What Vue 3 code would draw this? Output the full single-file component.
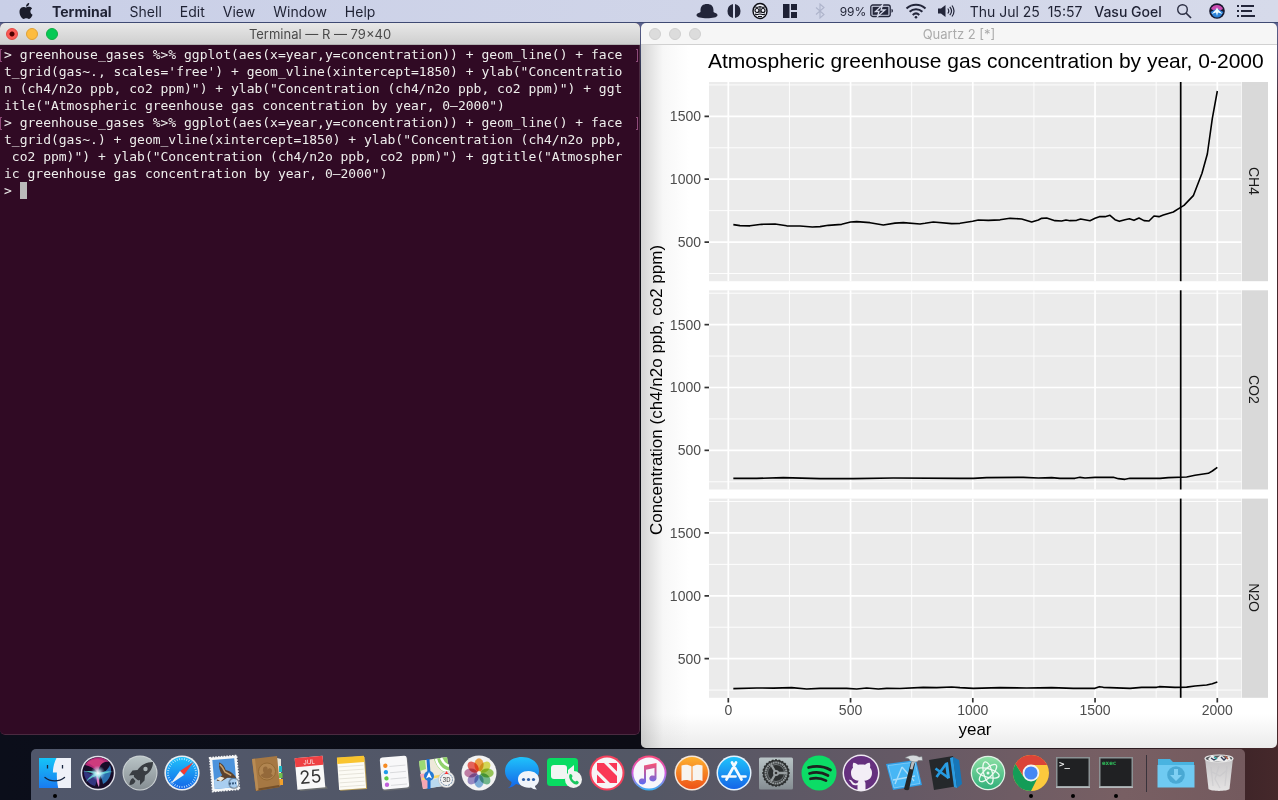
<script setup>
const menus = ['Shell', 'Edit', 'View', 'Window', 'Help']

const lines = [
  { text: '> greenhouse_gases %>% ggplot(aes(x=year,y=concentration)) + geom_line() + face', mark: true },
  { text: 't_grid(gas~., scales=\'free\') + geom_vline(xintercept=1850) + ylab("Concentratio' },
  { text: 'n (ch4/n2o ppb, co2 ppm)") + ylab("Concentration (ch4/n2o ppb, co2 ppm)") + ggt' },
  { text: 'itle("Atmospheric greenhouse gas concentration by year, 0–2000")' },
  { text: '> greenhouse_gases %>% ggplot(aes(x=year,y=concentration)) + geom_line() + face', mark: true },
  { text: 't_grid(gas~.) + geom_vline(xintercept=1850) + ylab("Concentration (ch4/n2o ppb,' },
  { text: ' co2 ppm)") + ylab("Concentration (ch4/n2o ppb, co2 ppm)") + ggtitle("Atmospher' },
  { text: 'ic greenhouse gas concentration by year, 0–2000")' },
]

const xAt = (year) => 728.3 + year * 0.2445
const yAt = (value) => 222.9 - value * 0.1257

const years = [0, 500, 1000, 1500, 2000]
const minorYears = [250, 750, 1250, 1750]
const values = [500, 1000, 1500]
const minorValues = [250, 750, 1250, 1750]

// Series points are on a grid three times finer than the plot.
const panels = [
  {
    name: 'CH4', top: 82, origin: 40,
    points: '280,554 300,557 330,557.5 365,553 405,552 440,557.5 480,558 517,561 540,560 565,556 605,553 632,546 650,545 690,548 730,555 765,549.5 790,548 840,552 855,550 880,546 935,551 960,550 998,544 1015,540 1045,541 1080,539.5 1110,535 1145,537 1175,546 1195,540 1205,535 1220,534 1245,542 1265,543 1278,540 1290,542 1310,541 1322,537 1350,542 1365,535 1378,530 1395,530 1410,526 1425,539 1438,544 1455,539 1468,536.5 1482,541 1497,534 1512,542 1527,543 1542,528 1557,530 1570,525 1600,516 1622,502 1632,496 1660,467 1686,400 1702,342 1717,235 1732,153',
  },
  {
    name: 'CO2', top: 290.3, origin: 440,
    points: '280,115 350,115 430,113 540,116 640,116 760,114 960,115 1000,115 1040,113 1150,112 1195,114 1235,113 1260,115 1305,115 1320,112 1335,114 1365,112 1420,112 1435,116 1455,118 1470,115 1560,115 1585,113 1640,111 1665,106 1705,100 1717,93 1732,82',
  },
  {
    name: 'N2O', top: 498.6, origin: 440,
    points: '280,746 350,744 400,744.5 455,743 500,747 540,745 620,745 650,747 680,744 715,747 740,745 780,745.5 850,742 890,743 935,741 960,743 1000,745 1080,743 1160,744 1235,743 1300,745 1365,745 1378,740 1390,742 1470,745 1505,742 1550,742 1558,740 1605,742 1640,741.5 1665,738 1700,735 1717,731 1732,726',
  },
]

const petals = ['#f79a2d', '#d9dc3c', '#8dc641', '#5fb57f', '#6fa8dc', '#8f7fc4', '#c06f9f', '#ef4e45']
const teeth = Array.from({ length: 24 }, (_, i) => i * 15)
const ticks = Array.from({ length: 36 }, (_, i) => i * 10)

const apps = [
  { id: 'finder', name: 'Finder', open: true },
  { id: 'siri', name: 'Siri' },
  { id: 'launchpad', name: 'Launchpad' },
  { id: 'safari', name: 'Safari' },
  { id: 'mail', name: 'Mail' },
  { id: 'contacts', name: 'Contacts' },
  { id: 'calendar', name: 'Calendar' },
  { id: 'notes', name: 'Notes' },
  { id: 'reminders', name: 'Reminders' },
  { id: 'maps', name: 'Maps' },
  { id: 'photos', name: 'Photos' },
  { id: 'messages', name: 'Messages' },
  { id: 'facetime', name: 'FaceTime' },
  { id: 'news', name: 'News' },
  { id: 'itunes', name: 'iTunes' },
  { id: 'books', name: 'Books' },
  { id: 'appstore', name: 'App Store' },
  { id: 'settings', name: 'System Preferences' },
  { id: 'spotify', name: 'Spotify' },
  { id: 'github', name: 'GitHub Desktop' },
  { id: 'xcode', name: 'Xcode' },
  { id: 'code', name: 'Visual Studio Code' },
  { id: 'atom', name: 'Atom' },
  { id: 'chrome', name: 'Google Chrome', open: true },
  { id: 'terminal', name: 'Terminal', open: true },
  { id: 'exec', name: 'exec', open: true },
  { id: 'separator' },
  { id: 'downloads', name: 'Downloads' },
  { id: 'trash', name: 'Trash' },
]
</script>

<template>
  <div class="desktop">
    <header class="menubar">
      <nav class="menus" aria-label="Menu bar">
        <button class="apple" aria-label="Apple">
          <svg width="16" height="16" viewBox="0 0 24 24"><path fill="#1b1d2b" d="M12.152 6.896c-.948 0-2.415-1.078-3.96-1.04-2.04.027-3.91 1.183-4.961 3.014-2.117 3.675-.546 9.103 1.519 12.09 1.013 1.454 2.208 3.09 3.792 3.039 1.52-.065 2.09-.987 3.935-.987 1.831 0 2.35.987 3.96.948 1.637-.026 2.676-1.48 3.676-2.948 1.156-1.688 1.636-3.325 1.662-3.415-.039-.013-3.182-1.221-3.22-4.857-.026-3.04 2.48-4.494 2.597-4.559-1.429-2.09-3.623-2.324-4.39-2.376-2-.156-3.675 1.09-4.61 1.09zM15.53 3.83c.843-1.012 1.4-2.427 1.245-3.83-1.207.052-2.662.805-3.532 1.818-.78.896-1.454 2.338-1.273 3.714 1.338.104 2.715-.688 3.559-1.701" /></svg>
        </button>
        <button class="app-menu">Terminal</button>
        <button v-for="m in menus" :key="m">{{ m }}</button>
      </nav>
      <div class="status">
        <button class="w30" aria-label="Bartender"><svg width="22" height="16" viewBox="0 0 22 16"><path d="M4.500 9V7.500C4.500 3 7 1 11 1s6.500 2 6.500 6.500V9c1.500 1 4 1.500 4 3 0 2.600-5 3.200-10.500 3.200S.5 14.600.5 12c0-1.500 2.500-2 4-3z" fill="#23263a" /></svg></button>
        <button class="w24" aria-label="Display"><svg width="16" height="16" viewBox="0 0 16 16" fill="#23263a"><path d="M7 1a7.200 7.200 0 0 0 0 14zM9 1a7.200 7.200 0 0 1 0 14z" /></svg></button>
        <button class="w28" aria-label="Owl"><svg width="18" height="18" viewBox="0 0 16 18"><ellipse cx="8" cy="9" rx="7" ry="7.500" fill="#f3f4fb" stroke="#0c0d14" stroke-width="1.400" /><path d="M2 4.500 5 5.500 8 4.500l3 1 3-1M3 12c2 1.500 3.500 0 5 0s3 1.500 5 0M6 14.500h4M8 5v6" fill="none" stroke="#0c0d14" stroke-width="1.100" /><circle cx="5" cy="8.500" r="2" fill="none" stroke="#0c0d14" stroke-width="1.200" /><circle cx="11" cy="8.500" r="2" fill="none" stroke="#0c0d14" stroke-width="1.200" /></svg></button>
        <button class="w32" aria-label="Window layout"><svg width="16" height="16" viewBox="0 0 16 16" fill="#1e2135"><path d="M1 1h6.500v14H1zM9 1h6v6H9zM9 9h6v6H9z" /></svg></button>
        <button class="w28" aria-label="Bluetooth"><svg width="12" height="16" viewBox="0 0 12 16" fill="none" stroke="#aeb4cb" stroke-width="1.100"><path d="m2 4.500 8 7-4 3.500V1l4 3.500-8 7" /></svg></button>
        <button class="battery"><span>99%</span><svg width="24" height="14" viewBox="0 0 24 14"><rect x=".8" y="1" width="19.400" height="11.500" rx="2" fill="none" stroke="#23263a" stroke-width="1.300" /><rect x="2.600" y="2.800" width="15.800" height="8" fill="#23263a" /><path d="M21.500 4.800q1.500.6 1.500 2t-1.500 2z" fill="#23263a" /><path d="m12.500 1-7 6.500H9l-1.500 5 7.500-6.500h-4z" fill="#23263a" stroke="#d5d9ea" stroke-width="1.300" /></svg></button>
        <button class="w32" aria-label="Wi-Fi"><svg width="22" height="16" viewBox="0 0 22 16" fill="none" stroke="#23263a" stroke-width="2"><path d="M1.500 5.500c5.500-5 13.500-5 19 0M4.600 8.800c3.700-3.400 9.100-3.400 12.800 0M7.700 11.900c2-1.800 4.600-1.800 6.600 0" /><circle cx="11" cy="14.200" r="1.300" fill="#23263a" stroke="none" /></svg></button>
        <button class="w28" aria-label="Volume"><svg width="18" height="14" viewBox="0 0 18 14"><path d="M1 4.500h3L8.500 1v12L4 9.500H1z" fill="#23263a" /><path d="M10.800 4.500q2 2.500 0 5M12.800 2.800q3.500 4.200 0 8.400M15 1.500q4 5.500 0 11" fill="none" stroke="#23263a" stroke-width="1.200" /></svg></button>
        <button class="clock">Thu Jul 25&nbsp; 15:57</button>
        <button class="user">Vasu Goel</button>
        <button class="w40" aria-label="Spotlight"><svg width="16" height="16" viewBox="0 0 16 16" fill="none" stroke="#2d3044" stroke-width="1.400"><circle cx="6.500" cy="6.500" r="4.800" /><path d="m10 10 5 5" stroke-width="1.700" /></svg></button>
        <button class="w26" aria-label="Siri"><svg width="16" height="16" viewBox="0 0 16 16"><circle cx="8" cy="8" r="7.800" fill="#15162c" /><path d="M2 6a6.500 6.500 0 0 1 12 0L8 9z" fill="#c94bb1" /><path d="M1.500 9 8 5.500 14.500 9 12 13a6.500 6.500 0 0 1-8 0z" fill="#2a82d8" /><path d="m8 4.500 1.500 2.500 4 4-4.500-1.500L8 13 7 9.500 2.500 11l4-4z" fill="#eefcff" /></svg></button>
        <button class="w32" aria-label="Notification Center"><svg width="18" height="14" viewBox="0 0 18 14" stroke="#23263a" stroke-width="2"><path d="M0 2h2M4 2h13M0 7h2M4 7h11M0 12h2M4 12h14" /></svg></button>
      </div>
    </header>

    <main class="workspace">
      <section class="window shell" aria-label="Terminal">
        <div class="titlebar">
          <div class="lights">
            <button class="light red" aria-label="Close"></button>
            <button class="light yellow" aria-label="Minimize"></button>
            <button class="light green" aria-label="Zoom"></button>
          </div>
          <h1>Terminal — R — 79×40</h1>
        </div>
        <div class="console">
          <div v-for="(l, i) in lines" :key="i" class="row" :class="{ marked: l.mark }">{{ l.text }}</div>
          <div class="row">&gt; <span class="cursor">&nbsp;</span></div>
        </div>
      </section>

      <section class="window quartz" aria-label="Quartz">
        <div class="titlebar">
          <div class="lights">
            <button class="light" aria-label="Close"></button>
            <button class="light" aria-label="Minimize"></button>
            <button class="light" aria-label="Zoom"></button>
          </div>
          <h1>Quartz 2 [*]</h1>
        </div>
        <div class="canvas">
          <svg class="plot" viewBox="641 45 636 703" role="img" aria-label="Greenhouse gas concentration chart">
            <text class="title" x="708" y="68">Atmospheric greenhouse gas concentration by year, 0-2000</text>
            <text class="axis" transform="translate(662 390) rotate(-90)" text-anchor="middle">Concentration (ch4/n2o ppb, co2 ppm)</text>
            <g v-for="p in panels" :key="p.name">
              <g :transform="`translate(0 ${p.top})`">
                <rect x="709" y="0" width="532.500" height="199.200" fill="#ebebeb" />
                <g stroke="#fff">
                  <path v-for="v in minorValues" :key="v" :d="`M709 ${yAt(v)}H1241.500`" stroke-width="0.900" />
                  <path v-for="y in minorYears" :key="y" :d="`M${xAt(y)} 0V199.200`" stroke-width="0.900" />
                  <path v-for="v in values" :key="v" :d="`M709 ${yAt(v)}H1241.500`" stroke-width="1.700" />
                  <path v-for="y in years" :key="y" :d="`M${xAt(y)} 0V199.200`" stroke-width="1.700" />
                </g>
                <rect x="1242" y="0" width="26" height="199.200" fill="#d9d9d9" />
                <text class="strip" transform="translate(1249 99) rotate(90)" text-anchor="middle">{{ p.name }}</text>
                <g v-for="v in values" :key="v">
                  <path :d="`M704.500 ${yAt(v)}H709`" stroke="#333" stroke-width="1.700" />
                  <text class="tick" x="701" :y="yAt(v) + 5" text-anchor="end">{{ v }}</text>
                </g>
                <path d="M1180.700 0V199.200" stroke="#000" stroke-width="1.700" />
              </g>
              <g :transform="`translate(640 ${p.origin}) scale(0.33333)`">
                <polyline :points="p.points" fill="none" stroke="#000" stroke-width="4.800" stroke-linejoin="round" />
              </g>
            </g>
            <g v-for="y in years" :key="y">
              <path :d="`M${xAt(y)} 698V702.500`" stroke="#333" stroke-width="1.700" />
              <text class="tick" :x="xAt(y)" y="715" text-anchor="middle">{{ y }}</text>
            </g>
            <text class="axis" x="975" y="735" text-anchor="middle">year</text>
          </svg>
        </div>
      </section>
    </main>

    <svg class="defs" width="0" height="0" aria-hidden="true">
      <defs>
        <linearGradient id="gBlue" x2="0" y2="1"><stop stop-color="#1fc3fb" /><stop offset="1" stop-color="#1465e8" /></linearGradient>
        <linearGradient id="gFinder" x2="0" y2="1"><stop stop-color="#14c4f8" /><stop offset="1" stop-color="#1a7bf0" /></linearGradient>
        <linearGradient id="gGray" x2="0" y2="1"><stop stop-color="#b9c4c6" /><stop offset="1" stop-color="#858d92" /></linearGradient>
        <linearGradient id="gOrange" x2="0" y2="1"><stop stop-color="#fdb02e" /><stop offset="1" stop-color="#ee5217" /></linearGradient>
        <linearGradient id="gAtom" x2="0" y2="1"><stop stop-color="#8ce0a4" /><stop offset="1" stop-color="#32b07a" /></linearGradient>
        <linearGradient id="gTunes" x2="0" y2="1"><stop stop-color="#fb4a78" /><stop offset=".5" stop-color="#d25be0" /><stop offset="1" stop-color="#35b4f5" /></linearGradient>
        <linearGradient id="gNote" x2="0" y2="1"><stop stop-color="#fb5071" /><stop offset="1" stop-color="#5b6cf3" /></linearGradient>
        <linearGradient id="gTrash" x2="0" y2="1"><stop stop-color="#c9c9cb" /><stop offset="1" stop-color="#ececec" /></linearGradient>
        <radialGradient id="gGlow"><stop stop-color="#fff" /><stop offset=".35" stop-color="#d8fbff" stop-opacity=".75" /><stop offset="1" stop-color="#9cf" stop-opacity="0" /></radialGradient>
      </defs>
    </svg>

    <footer class="dock" aria-label="Dock">
      <template v-for="a in apps" :key="a.id">
        <div v-if="a.id === 'separator'" class="separator"></div>
        <button v-else class="app" :aria-label="a.name">
          <svg width="40" height="40" viewBox="0 0 40 40">
            <g v-if="a.id === 'finder'">
              <path d="M4 5h32v30H4z" fill="#eef1f8" /><path d="M4 5h17.500c-2.500 5-3.500 9.500-3.600 14.500h4c-.3 5.500.3 10.500 1.300 15.500H4z" fill="url(#gFinder)" /><path d="M12.500 12v3.500M27.500 12v3.500" stroke="#15233c" stroke-width="1.300" /><path d="M10 24.500c5.500 4.500 14 4.500 19.500 0" fill="none" stroke="#15233c" stroke-width="1.400" stroke-linecap="round" />
            </g>
            <g v-else-if="a.id === 'siri'">
              <circle cx="20" cy="20" r="17.300" fill="#dfe0e8" /><circle cx="20" cy="20" r="15.800" fill="#170c28" /><path d="M7 12C12 3 25 2 31 9c-7-1-10 3-11 11C16 15 12 13 7 12z" fill="#b32a78" /><path d="M9 10c6-5 14-5 18-1-4 1-6 5-7 9-3-4-7-7-11-8z" fill="#d8437f" opacity=".7" /><path d="M32 12c3 8-1 16-7 19-1-5-2-8-5-11 6 0 10-3 12-8z" fill="#2b6fae" /><path d="M6 17c-1 8 5 15 11 16 2-5 3-9 3-13-5 2-10 1-14-3z" fill="#32357f" /><path d="M5 19c8-2 11-1 15 1 5-1 10-3 15-1-5 0-9 2-12 3-2 2-2 7-2 12-2-5-2-9-3-11-5 2-7 3-10 6 2-4 5-6 8-8-4-2-7-2-11-2z" fill="#5fdcd2" opacity=".85" /><path d="M19 22c2 3 3 7 2 12-2-3-3-8-2-12z" fill="#e77fc9" /><circle cx="20" cy="20" r="7.500" fill="url(#gGlow)" />
            </g>
            <g v-else-if="a.id === 'launchpad'">
              <circle cx="20" cy="20" r="17.500" fill="#cdd3d5" /><circle cx="20" cy="20" r="16.500" fill="url(#gGray)" /><path d="M33 9c-7 0-12 3-15.500 8l-5 .5L9 22.500l5-.5c-.5 1 0 2 .5 2.500l3 2.500c1 .5 1.500.5 2.500 0l0 5 4.500-4.500.5-5c5-3 8-7.500 8-13.500zM13 25c-2.500 1-3.500 4-3.500 7 3 0 5-1.500 6-4z" fill="#393d42" /><circle cx="25.500" cy="16" r="2.200" fill="#a9b2b5" />
            </g>
            <g v-else-if="a.id === 'safari'">
              <circle cx="20" cy="20" r="17.600" fill="#e9edf1" /><circle cx="20" cy="20" r="16" fill="url(#gBlue)" /><path v-for="t in ticks" :key="t" d="M20 5v2" stroke="#d7f1ff" stroke-width=".7" :transform="`rotate(${t} 20 20)`" /><path d="M31.500 9 22 22l-4-4z" fill="#f63b30" /><path d="M8.500 31 18 18l4 4z" fill="#f1f3f5" />
            </g>
            <g v-else-if="a.id === 'mail'" transform="rotate(-5 20 20)">
              <path d="M6 3.500h27v34H6z" fill="#f6f7f7" stroke="#f6f7f7" stroke-width="1.600" stroke-dasharray="1.600 1.200" /><path d="M8.500 6h22v29h-22z" fill="#4c93dc" /><path d="M8.500 26c7-3 15-1 22 1v8h-22z" fill="#a9cef0" /><path d="M15 9c3 1 5 4 6 8 4 1 8 5 10 9-4 0-6-1-9-1l-6 3-5-1c2-3 4-4 6-5-2-4-3-8-2-13z" fill="#5b422d" /><path d="M15.500 11c2 2 3.500 5 4.500 8l6 4" fill="none" stroke="#c9a06a" stroke-width="1.500" /><path d="m11 25 4-2 4 2-4 3z" fill="#f0e6d2" /><circle cx="28" cy="31" r="5" fill="none" stroke="#53697d" stroke-opacity=".6" stroke-width="1.500" /><path d="M23 31h7" stroke="#34577c" stroke-width="2" stroke-dasharray="2 1" />
            </g>
            <g v-else-if="a.id === 'contacts'">
              <path d="m30 5 4 1v26l-3 1z" fill="#e6e4da" /><path d="M32 13h3v6h-3z" fill="#1fb8c9" /><path d="M32 20h3.500v5H32z" fill="#72c04c" /><path d="M32 26h4v6h-4z" fill="#f0a02c" /><path d="m5 6 25-3 3 31-24 4z" fill="#a67843" /><path d="m9 38 24-4-1-2-24 4z" fill="#75502a" /><path d="m5 6 3-.3L11.500 37 9 38z" fill="#b88b54" /><circle cx="20" cy="18.500" r="8.500" fill="#b18550" stroke="#8d632f" stroke-width=".8" /><path d="M13.500 22.500c1-1.500 2.500-1.500 3.500-2.500-2-3-1-6.500 1.500-6.500 2 0 2.500 2 2 3.500 1-3 5-2 4.500 1 0 1-.5 2-1 2.500.5 1 1.500 1 2 2-3 4-9.500 4-12.500 0z" fill="#94693a" />
            </g>
            <g v-else-if="a.id === 'calendar'" transform="rotate(-5 20 20)">
              <path d="m7 35 28-1 1.500 3H9z" fill="#6c6f70" /><path d="M6 4h28v31.500H6z" fill="#f8f8f8" /><path d="M6 4h28v9H6z" fill="#ee4043" /><text x="20" y="11" text-anchor="middle" class="cal-month">JUL</text><text x="20" y="30" text-anchor="middle" class="cal-day">25</text>
            </g>
            <g v-else-if="a.id === 'notes'" transform="rotate(-4 20 20)">
              <path d="M7 5h27v32H7z" fill="#b99d55" /><path d="M6 4h27v32H6z" fill="#fcfbf5" /><path d="M6 3.500h27V10H6z" fill="#f9c42e" /><path d="M7 13h25M7 17h25M7 21h25M7 25h25M7 29h25M7 33h25" stroke="#dedbd0" stroke-width=".7" />
            </g>
            <g v-else-if="a.id === 'reminders'" transform="rotate(-5 20 20)">
              <rect x="6" y="5" width="28" height="32" rx="2.500" fill="#66696f" /><rect x="6" y="3.500" width="27" height="32" rx="2.500" fill="#f8f8f9" /><circle cx="11" cy="12" r="2.200" fill="#f68b23" /><circle cx="11" cy="18.300" r="2.200" fill="#1e9bea" /><circle cx="11" cy="24.600" r="2.200" fill="#5ccb46" /><circle cx="11" cy="31" r="2.200" fill="#c15fdc" /><path d="M15 13h16M15 19.300h16M15 25.600h16M15 32h16" stroke="#d2d3d6" stroke-width=".8" />
            </g>
            <g v-else-if="a.id === 'maps'">
              <path d="m2 8 28-4 4 28-28 4z" fill="#eee9da" /><path d="m17 6 13-2 3 16c-8 0-13-5-16-14z" fill="#91d26d" /><path d="m2 8 6-1 1 9-6 2z" fill="#9bd873" /><path d="m3 21 9-1 2 14-8 2z" fill="#f6a7b3" /><path d="m12 28 12-4 2 9-13 2z" fill="#b9d9ef" /><path d="M19 6c2 8 6 12 14 13M24 5c2 4 4 7 8 8" fill="none" stroke="#fff" stroke-width="2.500" /><path d="m11 6 1 14v16" fill="none" stroke="#1d6fce" stroke-width="3" /><path d="m5 26 24-4" stroke="#f8d768" stroke-width="2.500" /><circle cx="12" cy="23" r="5" fill="#2479d5" /><path d="m12 19 3 6.500-3-1.500-3 1.500z" fill="#fff" /><circle cx="29.500" cy="26.500" r="8" fill="#f2f2f2" stroke="#bbb" stroke-width=".6" /><circle cx="29.500" cy="26.500" r="6" fill="none" stroke="#58789b" stroke-width=".9" stroke-dasharray="2 .8" /><path d="m29.500 18 1.800 3h-3.600z" fill="#f33" /><text x="29.500" y="29" text-anchor="middle" class="three-d">3D</text>
            </g>
            <g v-else-if="a.id === 'photos'">
              <circle cx="20" cy="20" r="17.500" fill="#f2f2f2" /><g class="petals"><ellipse v-for="(c, i) in petals" :key="c" cx="20" cy="11.800" rx="4.600" ry="6.500" :fill="c" fill-opacity=".85" :transform="`rotate(${i * 45} 20 20)`" /></g>
            </g>
            <g v-else-if="a.id === 'messages'">
              <path d="M20 4c10 0 17 6 17 14s-7 14-17 14c-2 0-4-.3-6-1-2 2-4 3-8 4 3-2 3.500-4 3.500-6C5 26.500 3 22.500 3 18 3 10 10 4 20 4z" fill="url(#gBlue)" /><path d="M26.500 18c6 0 10.500 3.500 10.500 8.500 0 3-1.500 5-4 6.500 0 1 .5 2 2 3.500-3 0-4.500-1-6-2-7 1-13-2.500-13-8s4.500-8.500 10.500-8.500z" fill="#f1f5fa" /><circle cx="21.500" cy="26.500" r="1.600" fill="#2c5fa8" /><circle cx="26.500" cy="26.500" r="1.600" fill="#2c5fa8" /><circle cx="31.500" cy="26.500" r="1.600" fill="#2c5fa8" />
            </g>
            <g v-else-if="a.id === 'facetime'">
              <rect x="3" y="5" width="31" height="28" rx="3.500" fill="#09dc62" /><rect x="7" y="12" width="16" height="14" rx="3" fill="#f2f5f3" /><path d="m24 17 6-5v14l-6-5z" fill="#f2f5f3" /><circle cx="29.500" cy="26.500" r="8.500" fill="#f1f3f1" /><path d="M25.500 21.500c1.500-1.500 2.500 0 3 1.500 0 1-1 1.500-.5 2.500.8 1.500 2 2.500 3.300 3 1 0 1.200-1 2.200-.5 1.500.8 2 2 0 3.200-4 1.500-10-5.500-8-9.700z" fill="#19c75e" />
            </g>
            <g v-else-if="a.id === 'news'">
              <circle cx="20" cy="20" r="17.500" fill="#f5415c" /><circle cx="20" cy="20" r="15.500" fill="#f6f5f6" /><path d="M10 10h7L30 23v7h-7L10 17z" fill="#fa3756" /><path d="M21.500 10H30v8.500zM10 21.500l8.500 8.500H10z" fill="#fa3756" />
            </g>
            <g v-else-if="a.id === 'itunes'">
              <circle cx="20" cy="20" r="17.500" fill="url(#gTunes)" /><circle cx="20" cy="20" r="15.600" fill="#f7f6fb" /><path d="M15 12.500 27.500 10v15.500a3.600 3 0 1 1-2-2.800V15L17 16.700v11.800a3.600 3 0 1 1-2-2.800z" fill="url(#gNote)" />
            </g>
            <g v-else-if="a.id === 'books'">
              <circle cx="20" cy="20" r="17.500" fill="#f4e6da" /><circle cx="20" cy="20" r="16" fill="url(#gOrange)" /><path d="M9.500 12.500c4-1.500 7-1 10 1v15c-3-2-7-2-10-.5zM20.500 13.500c3-2 6-2.500 10-1V28c-3-1.500-7-1.500-10 .5z" fill="#f7f4f0" />
            </g>
            <g v-else-if="a.id === 'appstore'">
              <circle cx="20" cy="20" r="17.500" fill="#e3f1fb" /><circle cx="20" cy="20" r="16" fill="url(#gBlue)" /><path d="m22 9.500-9.500 17M18 9.500l9.500 17M8.500 23.500h13M26 23.500h5.500" stroke="#f3fafe" stroke-width="2.700" stroke-linecap="round" />
            </g>
            <g v-else-if="a.id === 'settings'">
              <rect x="3" y="4.500" width="34" height="32" rx="1.500" fill="url(#gGray)" /><circle cx="20" cy="20" r="13" fill="#2d3031" /><path v-for="t in teeth" :key="t" d="M20 8v-1.700" stroke="#2d3031" stroke-width="2" :transform="`rotate(${t} 20 20)`" /><circle cx="20" cy="20" r="10.500" fill="none" stroke="#949a9c" stroke-width="2" stroke-dasharray="1.800 .5" /><circle cx="20" cy="20" r="8.500" fill="none" stroke="#767c7f" stroke-width="1" /><path d="M20 20h10M20 20l-5-8.500M20 20l-5 8.500" stroke="#989ea0" stroke-width="2.300" /><circle cx="20" cy="20" r="3" fill="#9da3a5" /><circle cx="20" cy="20" r="1.300" fill="#333" />
            </g>
            <g v-else-if="a.id === 'spotify'">
              <circle cx="20" cy="20" r="17.500" fill="#0cdc66" /><path d="M9.500 14.500c8-2 15.500-1.200 22 2.500M10.500 20.500c7-2 13-1 18.500 2M11.500 25.800c5.500-1.500 10.500-.8 15.500 1.800" fill="none" stroke="#1d2220" stroke-width="2.700" stroke-linecap="round" />
            </g>
            <g v-else-if="a.id === 'github'">
              <circle cx="20" cy="20" r="18.500" fill="#efe9f2" /><circle cx="20" cy="20" r="17" fill="#65307e" /><path d="M16.500 37v-5c-4 1-5.500-.5-6.500-2.500-.5-1.200-1.500-2-2.200-2.500 2.200-.6 3.200 1 4.200 2.300 1 1.200 2.500 1.400 4.500.7.200-1 .7-1.700 1.200-2.200-5-.6-7.700-3-7.700-8 0-2.200.7-3.700 2-5-.4-1.800-.3-3.500.3-5 1.800 0 3.200.9 4.700 2 2-.5 5-.5 7 0 1.500-1.100 2.900-2 4.700-2 .6 1.500.7 3.200.3 5 1.300 1.300 2 2.800 2 5 0 5-2.700 7.400-7.700 8 .8.800 1.200 1.800 1.200 3.200v6z" fill="#f3eef6" />
            </g>
            <g v-else-if="a.id === 'xcode'">
              <path d="m2 11 30-4 6 25-29 5z" fill="#2e9ee8" /><path d="m4 12.500 27-3.500 5 21.500-26 4.500z" fill="#47b6f5" stroke="#a6dcfa" stroke-width=".6" /><path d="m18 14-7 17M18 14l12 14M9 27l22-4" fill="none" stroke="#a6dcfa" stroke-width="1.400" /><path d="m27 9-7 27c1.500 1.500 4 1.500 5 .5l6-26z" fill="#242628" /><path d="m28 7-2 9 2.500.5L31 8z" fill="#b9bdc0" /><path d="M21 5c5-4 12-3 14-1l3-.5.500 4-4 0c-1 1-2 1.500-3.500 1.500L26 8c0-2-2-3-5-3z" fill="#d5d9dc" stroke="#70767a" stroke-width=".5" />
            </g>
            <g v-else-if="a.id === 'code'">
              <path d="m3 7 24-4 5 30-24 4z" fill="#25282b" /><path d="m27 4 6 3 3 24-5 4z" fill="#1576b9" /><path d="m27 4 4 31-3-1-4-29z" fill="#2b9be0" /><path d="M9.500 15.500 22 24.500M10.500 24 20 11" stroke="#259ae0" stroke-width="2.600" /><path d="m19 10 3-1 2 16-3 1z" fill="#2da0e6" />
            </g>
            <g v-else-if="a.id === 'atom'">
              <circle cx="20" cy="20" r="17.300" fill="#dff1e5" /><circle cx="20" cy="20" r="16" fill="url(#gAtom)" /><g fill="none" stroke="#edfaf1" stroke-width="1.300"><ellipse cx="20" cy="20" rx="11.500" ry="4.300" transform="rotate(15 20 20)" /><ellipse cx="20" cy="20" rx="11.500" ry="4.300" transform="rotate(75 20 20)" /><ellipse cx="20" cy="20" rx="11.500" ry="4.300" transform="rotate(135 20 20)" /></g><circle cx="20" cy="20" r="1.500" fill="#edfaf1" />
            </g>
            <g v-else-if="a.id === 'chrome'">
              <circle cx="20" cy="20" r="18" fill="#fcc93d" /><path d="M4.400 11a18 18 0 0 1 31.200 0L36 12H20l-7 12z" fill="#db4437" /><path d="M4.400 11A18 18 0 0 0 20 38l7-14-7 3-8-4z" fill="#149c57" /><circle cx="20" cy="20" r="8.400" fill="#f3f3f3" /><circle cx="20" cy="20" r="6.600" fill="#4687f4" />
            </g>
            <g v-else-if="a.id === 'terminal' || a.id === 'exec'">
              <path d="M3 4h34v31H3z" fill="#8b9294" /><path d="M3 33.500h34V35H3z" fill="#b4b9bb" /><path d="M4.500 5.500h31V33h-31z" fill="#202123" /><text v-if="a.id === 'terminal'" x="6" y="14" class="prompt">&gt;_</text><text v-else x="6" y="12" class="exec">exec</text>
            </g>
            <g v-else-if="a.id === 'downloads'">
              <path d="M2 6h12l3 3h21v24H2z" fill="#49b3e0" /><path d="M1.500 12h37v22.500h-37z" fill="#6fcaf2" /><circle cx="20" cy="22" r="8.800" fill="#4aa9d4" /><path d="M18 16h4v6h4l-6 6-6-6h4z" fill="#7fd0f4" />
            </g>
            <g v-else-if="a.id === 'trash'">
              <path d="m6 5 3.500 31c3 2.500 18 2.500 21 0L34 5z" fill="url(#gTrash)" fill-opacity=".94" /><ellipse cx="20" cy="5.500" rx="14" ry="3.500" fill="#555a5d" stroke="#e8e8e8" stroke-width="1.200" /><path d="m9 6 4-4 5 3 4-3 4 3 4-2 2 4-7 2-8-1-5 1z" fill="#eee" /><path d="m12 5 3 2 3-2M22 4l3 3 3-3" fill="none" stroke="#333b55" stroke-width="1.400" /><path d="m15 4 3 2" stroke="#2aa6a5" stroke-width="1.500" /><path d="m26 3 3 3" stroke="#b75b42" stroke-width="1.200" /><path d="m12 14 2 19M20 13l-4 13 5 9M28 13l-2 20M13 19l8 4 6-5" fill="none" stroke="#c3c4c7" stroke-width="1.200" opacity=".5" />
            </g>
          </svg>
          <span class="dot" :class="{ on: a.open }"></span>
        </button>
      </template>
    </footer>
  </div>
</template>

<style>
body {
  background: #14111a;
}
</style>

<style scoped>
.desktop {
  display: flex;
  flex-direction: column;
  min-height: 100vh;
  background: linear-gradient(90deg, #0b0e1a 0%, #0c0c15 50%, #2b1b20 88%, #45282b 100%);
  font-family: Inter, "Liberation Sans", sans-serif;
}
button {
  display: flex;
  align-items: center;
  justify-content: center;
  padding: 0;
  border: 0;
  background: none;
  color: inherit;
  font: inherit;
  white-space: nowrap;
}
svg {
  display: block;
  flex: none;
}
.menubar {
  display: flex;
  justify-content: space-between;
  box-sizing: border-box;
  height: 23px;
  border-bottom: 1px solid #3f4a73;
  background: linear-gradient(90deg, #c9cfe7, #d6daea);
  color: #1f2234;
  font-size: 14px;
}
.menus {
  display: flex;
  gap: 18px;
  padding-left: 18px;
}
.apple {
  width: 16px;
}
.app-menu {
  font-weight: 700;
}
.status {
  display: flex;
  padding-right: 16px;
}
.w24 { width: 24px; }
.w26 { width: 26px; }
.w28 { width: 28px; }
.w30 { width: 30px; }
.w32 { width: 32px; }
.w40 { width: 40px; }
.battery {
  width: 66px;
  gap: 4px;
  font-size: 12px;
}
.clock {
  width: 132px;
}
.user {
  width: 72px;
  font-weight: 500;
}
.workspace {
  flex: 1;
  display: grid;
  grid-template-columns: 640fr 636fr;
  gap: 1px;
  padding: 0 1px 1px 0;
  background: linear-gradient(#5a6290, transparent 90px);
}
.window {
  display: flex;
  flex-direction: column;
  min-width: 0;
  overflow: hidden;
  border-radius: 5px;
}
.titlebar {
  display: grid;
  grid-template-columns: 1fr auto 1fr;
  align-items: center;
  box-sizing: border-box;
  height: 22px;
  border-bottom: 1px solid #b1b1b1;
  background: linear-gradient(#e8e8e8, #cfcfcf);
}
.titlebar h1 {
  margin: 0;
  color: #4a4a4a;
  font-size: 13px;
  font-weight: 400;
}
.lights {
  display: flex;
  gap: 8px;
  padding-left: 6px;
}
.light {
  box-sizing: border-box;
  width: 12px;
  height: 12px;
  border: 1px solid #cfcfcf;
  border-radius: 50%;
  background: #dcdcdc;
}
.red {
  border-color: #e2463f;
  background: radial-gradient(circle, #4d0000 0 2px, #fc5b57 3px);
}
.yellow {
  border-color: #e0a135;
  background: #fdbc40;
}
.green {
  border-color: #12ac45;
  background: #04c955;
}
.shell {
  margin-bottom: 13px;
  background: #300a24;
}
.console {
  flex: 1;
  padding-top: 1px;
  border: solid #4a2a40;
  border-width: 0 1px 1px 0;
  border-radius: 0 0 5px 5px;
  color: #eeeeec;
  font-family: "DejaVu Sans Mono", "Liberation Mono", monospace;
  font-size: 13px;
  line-height: 17px;
}
.row {
  position: relative;
  padding-left: 4px;
  white-space: pre;
}
/* Prompt marks at both edges of the line */
.marked::before,
.marked::after {
  content: "";
  position: absolute;
  top: 3px;
  box-sizing: border-box;
  width: 2px;
  height: 13px;
  border: 1px solid #8d4a78;
}
.marked::before {
  left: 0;
  border-left: 0;
}
.marked::before {
  border-right: 0;
  border-left: 1px solid #8d4a78;
}
.marked::after {
  right: 1px;
  border-left: 0;
}
.cursor {
  display: inline-block;
  background: #bababa;
}
.quartz .titlebar {
  border-color: #d1d1d1;
  background: #f6f6f6;
}
.quartz h1 {
  color: #ababab;
}
.quartz .lights {
  padding-left: 8px;
}
.canvas {
  flex: 1;
  display: flex;
  background:
    linear-gradient(90deg, rgba(120, 120, 120, 0.32), rgba(180, 180, 180, 0.1) 22px, transparent 48px),
    linear-gradient(0deg, #ebebeb, #fff 34px);
}
.plot {
  flex: 1;
  min-width: 0;
  font-family: "Liberation Sans", Arial, sans-serif;
}
.title {
  font-size: 21px;
}
.axis {
  font-size: 17px;
}
.tick {
  fill: #4d4d4d;
  font-size: 14px;
}
.strip {
  fill: #1a1a1a;
  font-size: 14px;
}
.defs {
  position: absolute;
}
.dock {
  display: flex;
  box-sizing: border-box;
  height: 51px;
  margin: 0 33px 0 31px;
  padding: 4px 5px 0 3px;
  border-radius: 5px 5px 0 0;
  background: linear-gradient(90deg, #50576b 0%, #535765 50%, #655965 72%, #785f63 90%, #745a5e 100%);
}
.app {
  flex: 1 1 0;
  flex-direction: column;
  justify-content: flex-start;
  min-width: 0;
}
.dot {
  width: 4px;
  height: 4px;
  margin-top: 1px;
  border-radius: 50%;
}
.on {
  background: #000;
}
.separator {
  width: 1px;
  height: 37px;
  margin: 2px 8px 0 9px;
  background: #39333b;
}
.petals ellipse {
  mix-blend-mode: multiply;
}
.cal-month {
  fill: #fff;
  font-size: 6px;
}
.cal-day {
  fill: #333;
  font-size: 18px;
}
.three-d {
  fill: #333;
  font-size: 6px;
}
.prompt {
  fill: #f2f2f2;
  font: 700 9px "DejaVu Sans Mono", monospace;
}
.exec {
  fill: #2fc15c;
  font: 700 6px "DejaVu Sans Mono", monospace;
}
</style>
